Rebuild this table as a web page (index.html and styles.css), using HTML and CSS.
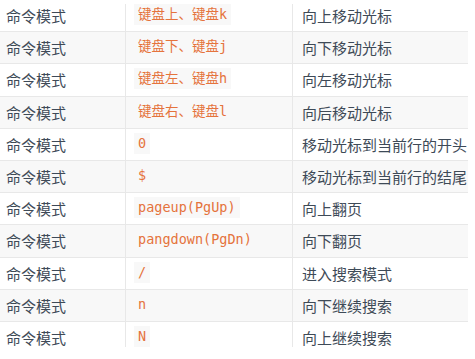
FILE: index.html
```html
<!DOCTYPE html>
<html lang="zh-CN">
<head>
<meta charset="utf-8">
<title>命令模式</title>
<link rel="stylesheet" href="styles.css">
</head>
<body>
<div class="table">
  <div class="row"><div class="cell c1">命令模式</div><div class="cell c2"><code>键盘上、键盘k</code></div><div class="cell c3">向上移动光标</div></div>
  <div class="row"><div class="cell c1">命令模式</div><div class="cell c2"><code>键盘下、键盘j</code></div><div class="cell c3">向下移动光标</div></div>
  <div class="row"><div class="cell c1">命令模式</div><div class="cell c2"><code>键盘左、键盘h</code></div><div class="cell c3">向左移动光标</div></div>
  <div class="row"><div class="cell c1">命令模式</div><div class="cell c2"><code>键盘右、键盘l</code></div><div class="cell c3">向后移动光标</div></div>
  <div class="row"><div class="cell c1">命令模式</div><div class="cell c2"><code>0</code></div><div class="cell c3">移动光标到当前行的开头</div></div>
  <div class="row"><div class="cell c1">命令模式</div><div class="cell c2"><code>$</code></div><div class="cell c3">移动光标到当前行的结尾</div></div>
  <div class="row"><div class="cell c1">命令模式</div><div class="cell c2"><code>pageup(PgUp)</code></div><div class="cell c3">向上翻页</div></div>
  <div class="row"><div class="cell c1">命令模式</div><div class="cell c2"><code>pangdown(PgDn)</code></div><div class="cell c3">向下翻页</div></div>
  <div class="row"><div class="cell c1">命令模式</div><div class="cell c2"><code>/</code></div><div class="cell c3">进入搜索模式</div></div>
  <div class="row"><div class="cell c1">命令模式</div><div class="cell c2"><code>n</code></div><div class="cell c3">向下继续搜索</div></div>
  <div class="row"><div class="cell c1">命令模式</div><div class="cell c2"><code>N</code></div><div class="cell c3">向上继续搜索</div></div>
</div>
</body>
</html>
```

FILE: styles.css
```css
html, body {
  margin: 0;
  padding: 0;
  background: #ffffff;
}
body {
  font-family: "Noto Sans CJK SC", "Noto Sans", sans-serif;
  font-size: 15px;
  color: #3e4a57;
}
.table {
  width: 468px;
  height: 347px;
  overflow: hidden;
  clip-path: inset(4px 0 0 0);
}
.row {
  display: grid;
  grid-template-columns: 125px 167px 176px;
  height: 32.2px;
  box-sizing: border-box;
  border-bottom: 1px solid #e8e8e8;
  background: #ffffff;
}
.row:nth-child(even) {
  background: #f8f8f8;
}
.cell {
  display: flex;
  align-items: center;
  box-sizing: border-box;
  white-space: nowrap;
  line-height: 1;
}
.c1 {
  padding-left: 6px;
}
.c2 {
  border-left: 1px solid #e8e8e8;
  padding-left: 8px;
}
.c3 {
  border-left: 1px solid #e8e8e8;
  padding-left: 9px;
}
code {
  font-family: "DejaVu Sans Mono", "Noto Sans CJK SC", monospace;
  font-size: 13.5px;
  color: #e5733c;
  background: #f8f8f8;
  padding: 4px 4px;
  line-height: 13px;
  margin-top: -2px;
}
```
